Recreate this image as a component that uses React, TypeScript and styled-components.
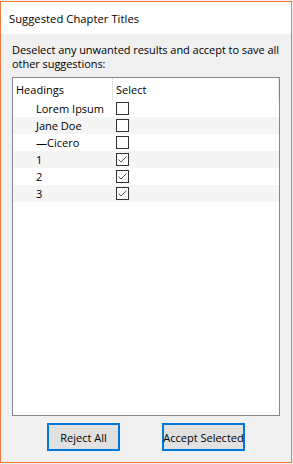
import React from "react";
import styled, { createGlobalStyle } from "styled-components";

const GlobalStyle = createGlobalStyle`
  html, body { margin: 0; padding: 0; background: #f0f0f0; }
  body { font-family: "Open Sans", "Noto Sans", sans-serif; }
  * { box-sizing: border-box; }
`;

const FONT = `"Open Sans", "Noto Sans", sans-serif`;

const Window = styled.div`
  width: 292px;
  height: 462px;
  margin-top: 1px;
  border: 1px solid #f3793b;
  background: #f0f0f0;
  display: flex;
  flex-direction: column;
  font-family: ${FONT};
  font-size: 11px;
  color: #000;
`;

const TitleBar = styled.div`
  height: 32px;
  flex: none;
  background: #ffffff;
  display: flex;
  align-items: center;
  padding-left: 8px;
  font-size: 11.2px;
  letter-spacing: 0.05px;
  color: #000;
`;

const Content = styled.div`
  flex: 1;
  display: flex;
  flex-direction: column;
  padding: 9px 11px 11px 11px;
`;

const Description = styled.div`
  margin: 0 0 6px 0;
  white-space: nowrap;
  letter-spacing: -0.05px;
`;

const DescLine = styled.div`
  height: 14px;
  line-height: 14px;
`;

const ListBox = styled.div`
  height: 339px;
  flex: none;
  border: 1px solid #828790;
  background: #ffffff;
  display: flex;
  flex-direction: column;
`;

const HeaderRow = styled.div`
  height: 22px;
  display: flex;
`;

const HeadCell = styled.div<{ $w?: number }>`
  ${(p) => (p.$w ? `width: ${p.$w}px; flex: none;` : `flex: 1;`)}
  border-right: 1px solid #e5e5e5;
  display: flex;
  align-items: center;
  padding-left: 3px;
`;

const Row = styled.div<{ $alt: boolean }>`
  height: 17px;
  display: flex;
  align-items: center;
  background: ${(p) => (p.$alt ? "#f5f5f5" : "#ffffff")};
`;

const NameCell = styled.div`
  width: 100px;
  flex: none;
  padding-left: 23px;
  white-space: nowrap;
`;

const SelectCell = styled.div`
  flex: 1;
  display: flex;
  align-items: center;
  padding-left: 3px;
`;

const Box = styled.span`
  width: 13px;
  height: 13px;
  border: 1px solid #333333;
  background: #ffffff;
  display: flex;
  align-items: center;
  justify-content: center;
`;

const Buttons = styled.div`
  display: flex;
  justify-content: center;
  gap: 42px;
  margin-top: 7px;
`;

const Button = styled.button<{ $w: number }>`
  width: ${(p) => p.$w}px;
  height: 28px;
  border: 2px solid #0078d7;
  background: #e1e1e1;
  font-family: ${FONT};
  font-size: 11px;
  color: #000;
  padding: 0;
  display: flex;
  align-items: center;
  justify-content: center;
  white-space: nowrap;
`;

const Check = () => (
  <svg width="11" height="11" viewBox="0 0 11 11">
    <polyline points="1.5,5.5 4,8 9.5,2.5" fill="none" stroke="#555" strokeWidth="1" />
  </svg>
);

const rows = [
  { label: "Lorem Ipsum", checked: false },
  { label: "Jane Doe", checked: false },
  { label: "\u2014Cicero", checked: false },
  { label: "1", checked: true },
  { label: "2", checked: true },
  { label: "3", checked: true },
];

export default function App() {
  return (
    <>
      <GlobalStyle />
      <Window>
        <TitleBar>Suggested Chapter Titles</TitleBar>
        <Content>
          <Description>
            <DescLine>Deselect any unwanted results and accept to save all</DescLine>
            <DescLine>other suggestions:</DescLine>
          </Description>
          <ListBox>
            <HeaderRow>
              <HeadCell $w={100}>Headings</HeadCell>
              <HeadCell>Select</HeadCell>
            </HeaderRow>
            {rows.map((r, i) => (
              <Row key={i} $alt={i % 2 === 1}>
                <NameCell>{r.label}</NameCell>
                <SelectCell>
                  <Box>{r.checked && <Check />}</Box>
                </SelectCell>
              </Row>
            ))}
          </ListBox>
          <Buttons>
            <Button $w={73}>Reject All</Button>
            <Button $w={83}>Accept Selected</Button>
          </Buttons>
        </Content>
      </Window>
    </>
  );
}
